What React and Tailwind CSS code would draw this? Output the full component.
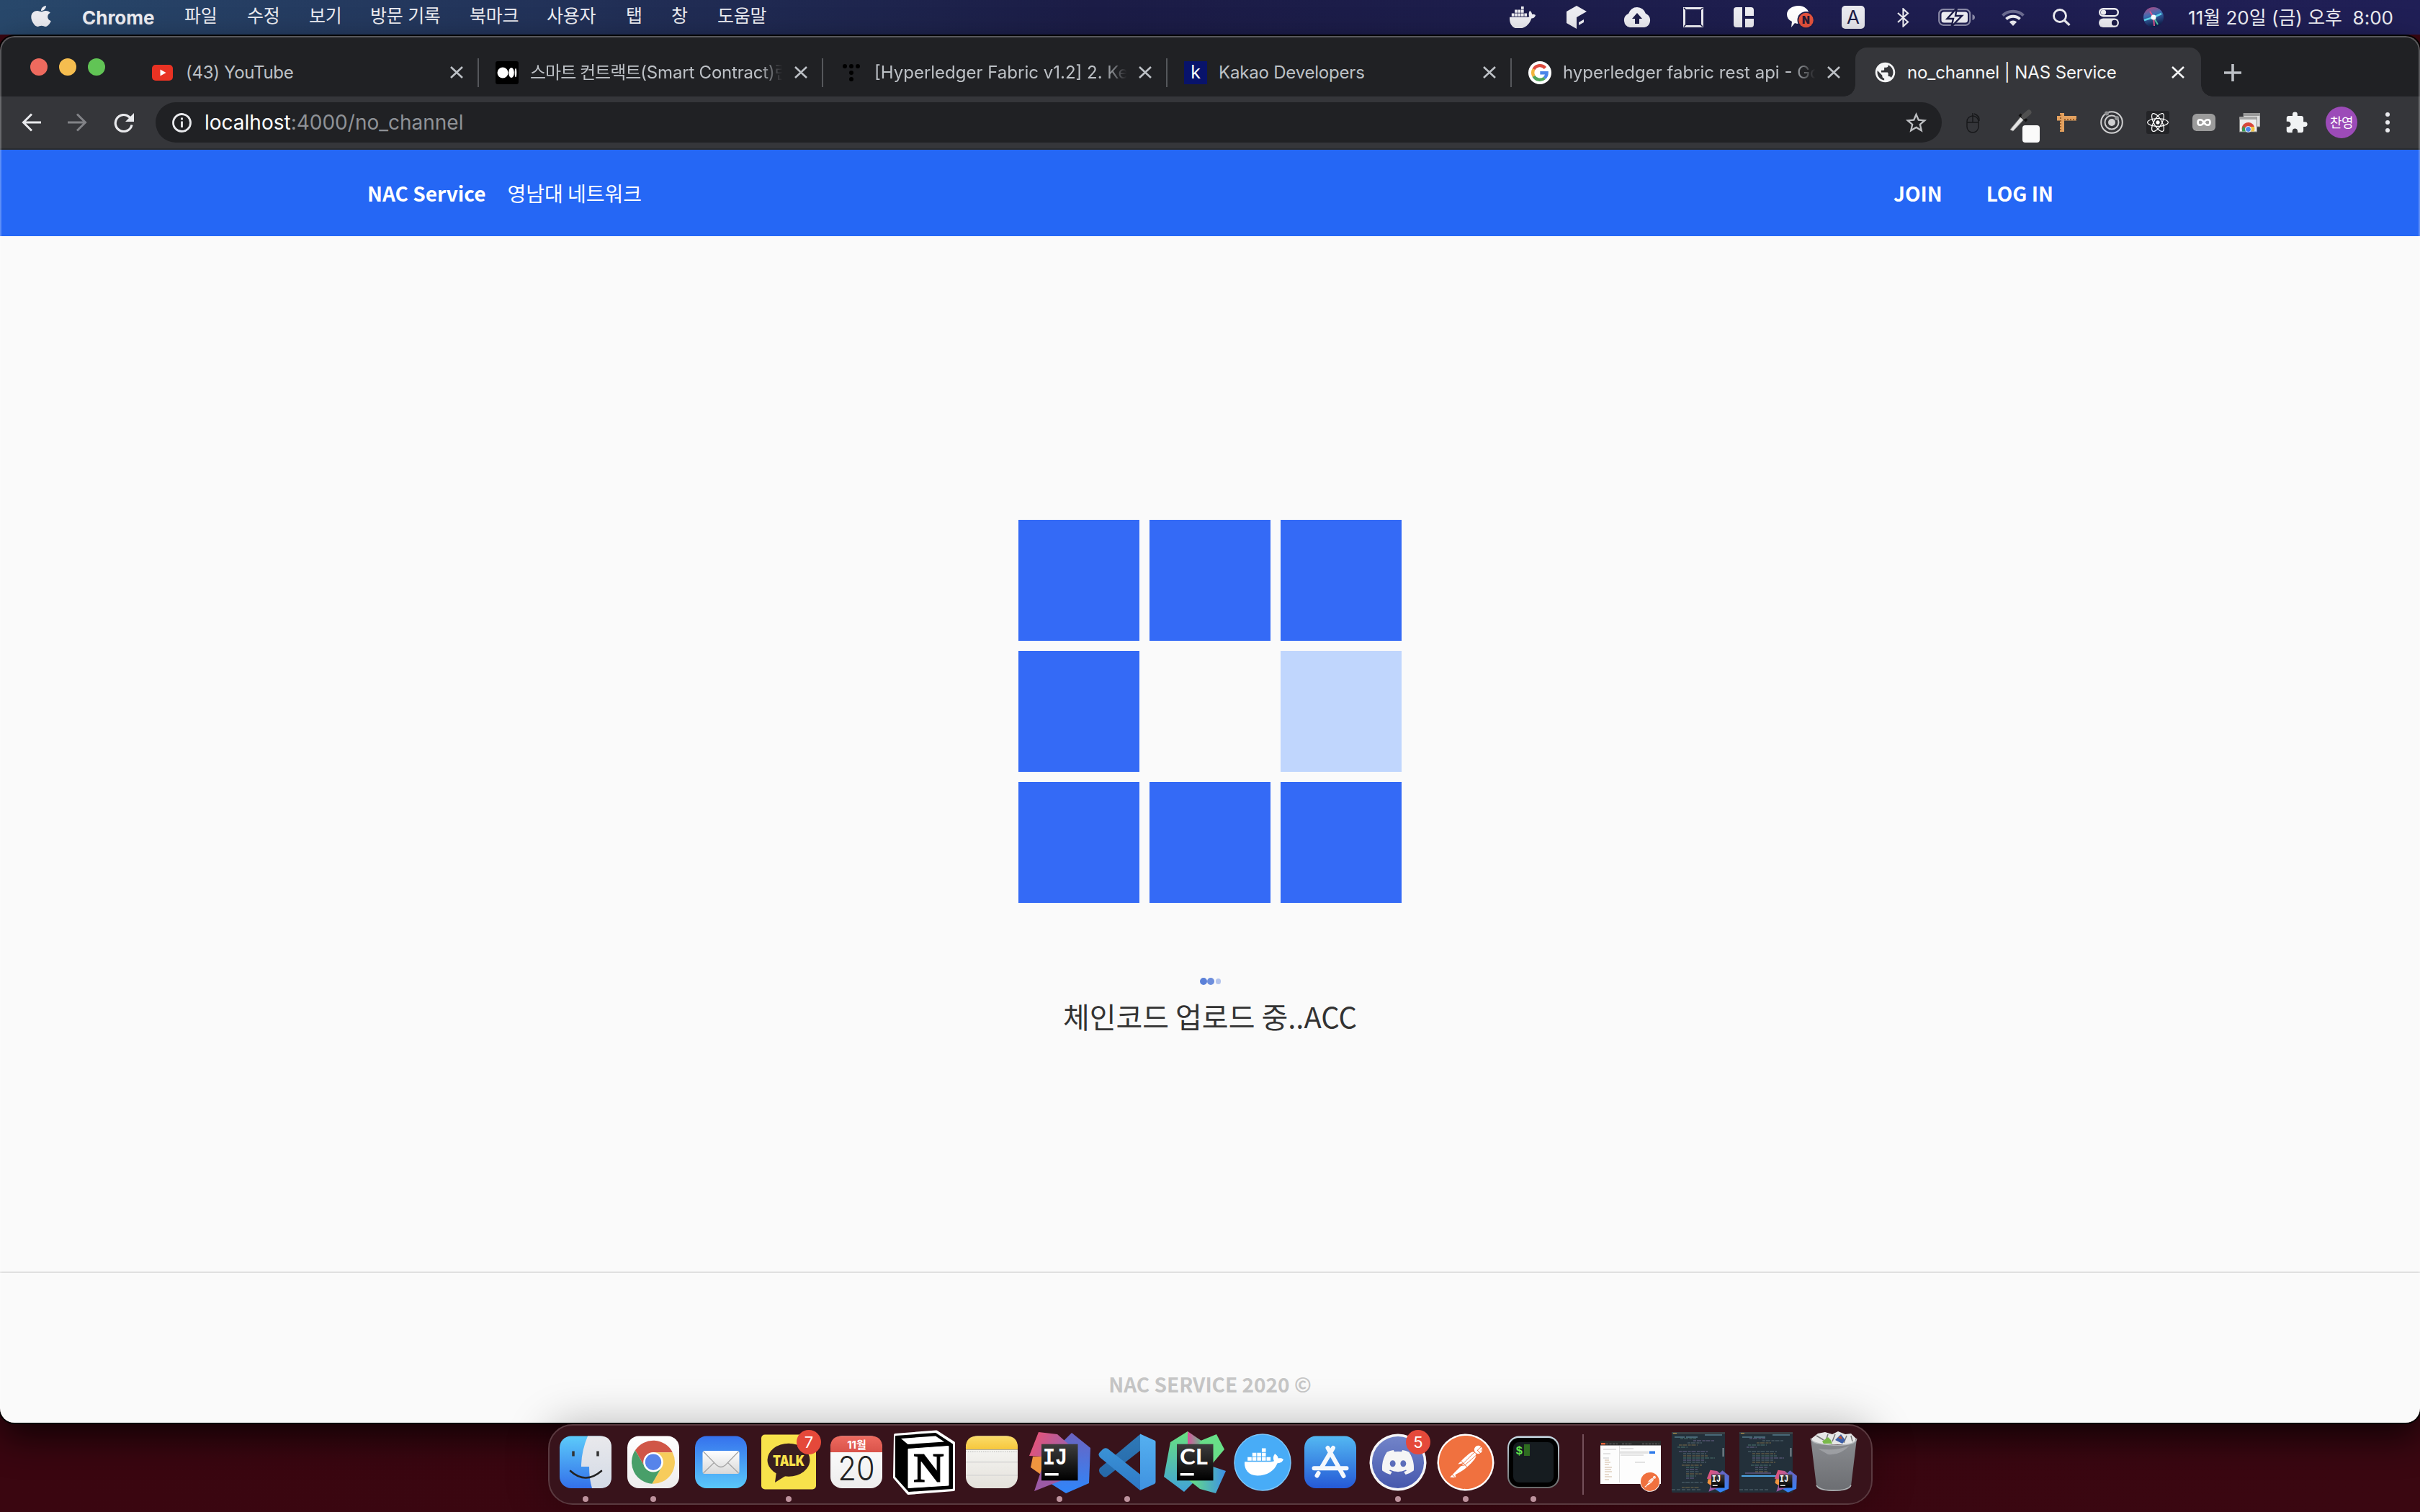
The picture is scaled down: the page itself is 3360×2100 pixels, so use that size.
import React from "react";
import { FaApple, FaDocker, FaDiscord, FaReact } from "react-icons/fa";
import { SiPostman } from "react-icons/si";
import { MdStarBorder, MdPublic, MdExtension } from "react-icons/md";

const UI = "font-['Inter','Noto_Sans_CJK_KR',sans-serif]";
const KR = "font-['Noto_Sans_CJK_KR',sans-serif]";

/* ---------- menu bar ---------- */

const MENUS = [
  ["파일", "w-[87px]"],
  ["수정", "w-[86px]"],
  ["보기", "w-[85px]"],
  ["방문 기록", "w-[138px]"],
  ["북마크", "w-[107px]"],
  ["사용자", "w-[110px]"],
  ["탭", "w-[63px]"],
  ["창", "w-[64px]"],
  ["도움말", "w-[90px]"],
];

function MenuBar() {
  return (
    <header className={`flex h-[48px] items-center whitespace-nowrap bg-linear-to-r from-[#28486b] via-[#1b1c46] via-45% to-[#201f56] text-[#ededf2] ${UI}`}>
      <FaApple className="ml-[43px] -mt-[3px] h-[33px] w-[28px]" preserveAspectRatio="none" />
      <span className="ml-[43px] w-[142px] text-[26px] font-bold">Chrome</span>
      {MENUS.map(([t, w]) => (
        <span key={t} className={`-mt-[3px] text-[25px] tracking-[-0.3px] ${w}`}>{t}</span>
      ))}
      <div className="ml-auto flex h-full items-center pr-[37px]">
        <FaDocker className="h-[30px] w-[36px]" preserveAspectRatio="none" viewBox="0 40 640 430" />
        <svg className="ml-[43px] h-[32px] w-[28px]" viewBox="0 0 28 32" fill="currentColor">
          <path d="M14 0L28 8L14 16V32L0 24V8Z" />
          <path d="M17 23L24 19V23L17 27Z" />
        </svg>
        <svg className="ml-[50px] h-[28px] w-[40px]" viewBox="0 0 40 28">
          <path d="M10 28A10 10 0 0 1 8 9A12.500 12.500 0 0 1 32 9A10 10 0 0 1 30 28Z" fill="currentColor" />
          <path d="M20 8L27 16H23V23H17V16H13Z" fill="#1c1c48" />
        </svg>
        <svg className="ml-[44px] h-[28px] w-[28px]" viewBox="0 0 28 28" fill="none" stroke="currentColor" strokeWidth="3">
          <rect x="1.500" y="1.500" width="25" height="25" />
          <path d="M1 1L4 4M27 1L24 4M1 27L4 24M27 27L24 24" stroke="#1c1c48" strokeWidth="1.500" />
        </svg>
        <svg className="ml-[42px] h-[28px] w-[28px]" viewBox="0 0 28 28" fill="currentColor">
          <path d="M4 0H12V28H4A4 4 0 0 1 0 24V4A4 4 0 0 1 4 0ZM16 0H24A4 4 0 0 1 28 4V12H16ZM16 16H28V24A4 4 0 0 1 24 28H16Z" />
        </svg>
        <svg className="ml-[46px] h-[32px] w-[37px]" viewBox="0 0 37 32">
          <path d="M16 0C25 0 31 6 31 13S25 25 16 25Q13 25 11 24L6 30L7 22Q0 19 0 12C0 5 7 0 16 0Z" fill="#fff" />
          <circle cx="26.500" cy="20" r="12" fill="#1c1c48" />
          <circle cx="26.500" cy="20" r="10.300" fill="#e5533d" />
          <text x="26.500" y="25" textAnchor="middle" fontSize="14" fontWeight="900" fill="#241a35">N</text>
        </svg>
        <span className="ml-[39px] flex h-[32px] w-[32px] items-center justify-center rounded-[5px] bg-[#e9e9ef] text-[26px] leading-none text-[#1c1c48]">A</span>
        <svg className="ml-[45px] h-[27px] w-[17px]" viewBox="0 0 17 27" fill="none" stroke="currentColor" strokeWidth="2.200">
          <path d="M1 7L15 19.500L8.500 25.500V1.500L15 7.500L1 20" />
        </svg>
        <svg className="ml-[40px] h-[24px] w-[51px]" viewBox="0 0 51 24">
          <rect x="1.200" y="1.200" width="43" height="21.600" rx="6" fill="none" stroke="#8b8ba8" strokeWidth="2.200" />
          <path d="M47.500 8V16Q51 15 51 12Q51 9 47.500 8Z" fill="#8b8ba8" />
          <rect x="4.500" y="4.500" width="36.500" height="15" rx="3.500" fill="currentColor" />
          <path d="M26 -1L12.500 14H21L18.500 25L33 10H24Z" fill="currentColor" stroke="#1c1c48" strokeWidth="2.400" />
        </svg>
        <svg className="ml-[37px] h-[24px] w-[32px]" viewBox="0 0 32 24" fill="none" strokeWidth="4">
          <path d="M1.500 9.500A21 21 0 0 1 30.500 9.500" stroke="#6b6b90" />
          <path d="M6.500 14.500A14 14 0 0 1 25.500 14.500" stroke="currentColor" />
          <path d="M16 24L10.800 18.500A7.500 7.500 0 0 1 21.200 18.500Z" fill="currentColor" />
        </svg>
        <svg className="ml-[39px] h-[24px] w-[25px]" viewBox="0 0 25 24" fill="none" stroke="currentColor" strokeWidth="2.800">
          <circle cx="10" cy="10" r="8.500" />
          <path d="M16 16L23.500 23" strokeWidth="3.200" />
        </svg>
        <svg className="ml-[39px] h-[27px] w-[28px]" viewBox="0 0 28 27">
          <rect x="1.200" y="1.200" width="25.600" height="10" rx="5" fill="none" stroke="currentColor" strokeWidth="2.400" />
          <circle cx="6.500" cy="6.200" r="3.600" fill="currentColor" />
          <rect y="14.500" width="28" height="12.500" rx="6.200" fill="currentColor" />
          <circle cx="21.800" cy="20.700" r="3.900" fill="#1c1c48" />
        </svg>
        <svg className="ml-[34px] h-[28px] w-[28px]" viewBox="0 0 28 28">
          <defs>
            <linearGradient id="siri" x1="0" y1="0" x2="0.300" y2="1">
              <stop offset="0" stopColor="#c2447c" /><stop offset="0.450" stopColor="#3e6fb5" /><stop offset="1" stopColor="#10204f" />
            </linearGradient>
          </defs>
          <circle cx="14" cy="14" r="14" fill="url(#siri)" />
          <path d="M14 14L1 18M14 14L25 9" stroke="#5bd2ea" strokeWidth="2.500" />
          <path d="M14 14L20 24" stroke="#54c9a5" strokeWidth="2" />
          <path d="M14 14L15 26M14 14L9 6" stroke="#e0568f" strokeWidth="2" />
          <circle cx="14" cy="14" r="3.500" fill="#fff" />
        </svg>
        <span className="ml-[34px] whitespace-pre text-[26px]">11월 20일 (금) 오후  8:00</span>
      </div>
    </header>
  );
}

/* ---------- browser ---------- */

function Cross({ className }) {
  return (
    <svg className={`h-[17px] w-[18px] shrink-0 ${className}`} viewBox="0 0 18 17" stroke="currentColor" strokeWidth="2.600">
      <path d="M1 1L17 16M17 1L1 16" />
    </svg>
  );
}

function GoogleG() {
  return (
    <svg className="h-[32px] w-[32px] shrink-0" viewBox="0 0 32 32">
      <circle cx="16" cy="16" r="16" fill="#fff" />
      <g fill="none" strokeWidth="4.400">
        <path d="M23.500 9.500A9.800 9.800 0 0 0 7.500 11.200" stroke="#dd4b3e" />
        <path d="M7.500 11.200A9.800 9.800 0 0 0 7.500 20.800" stroke="#f2b63c" />
        <path d="M7.500 20.800A9.800 9.800 0 0 0 22.500 23.300" stroke="#51a45a" />
        <path d="M22.500 23.300A9.800 9.800 0 0 0 25.600 16.200H16.300" stroke="#4b85ea" />
      </g>
    </svg>
  );
}

const TABS = [
  {
    title: <span className="tracking-[-0.3px]">(43) YouTube</span>,
    icon: (
      <svg className="h-[32px] w-[32px] shrink-0" viewBox="0 0 32 32">
        <rect x="1" y="5" width="29" height="22" rx="5" fill="#e93223" />
        <path d="M12.500 11.500L20.500 16L12.500 20.500Z" fill="#fff" />
      </svg>
    ),
  },
  {
    title: <><span className="tracking-[-1px]">스마트 컨트랙트</span><span className="tracking-[-0.2px]">(Smart Contract)</span><span className="tracking-[-4px]">란</span></>,
    fade: true,
    icon: (
      <svg className="h-[32px] w-[32px] shrink-0" viewBox="0 0 32 32">
        <rect width="32" height="32" rx="3" fill="#000" />
        <circle cx="10" cy="16" r="7.500" fill="#fff" />
        <ellipse cx="22" cy="16" rx="3.800" ry="7" fill="#fff" />
        <ellipse cx="28" cy="16" rx="1.300" ry="6.300" fill="#fff" />
      </svg>
    ),
  },
  {
    title: "[Hyperledger Fabric v1.2] 2. Ke",
    fade: true,
    icon: (
      <svg className="h-[32px] w-[32px] shrink-0" viewBox="0 0 32 32" fill="#000">
        <circle cx="7" cy="7" r="3" /><circle cx="16" cy="7" r="3" /><circle cx="25" cy="7" r="3" />
        <circle cx="16" cy="16" r="3" /><circle cx="16" cy="25" r="3" />
      </svg>
    ),
  },
  {
    title: <span className="tracking-[-0.2px]">Kakao Developers</span>,
    icon: <span className="flex h-[32px] w-[32px] shrink-0 items-center justify-center bg-[#08136b] text-[25px] leading-none text-white">k</span>,
  },
  { title: "hyperledger fabric rest api - Go", fade: true, icon: <GoogleG /> },
];

function TabStrip() {
  return (
    <div className="flex h-[84px] items-end bg-[#202124] pt-[14px] text-[24px] text-[#bdc1c6]">
      <div className="flex h-full w-[187px] gap-[16px] pl-[42px] pt-[17px]">
        <span className="h-[24px] w-[24px] rounded-full bg-[#ee6a5e]" />
        <span className="h-[24px] w-[24px] rounded-full bg-[#f5bd4f]" />
        <span className="h-[24px] w-[24px] rounded-full bg-[#61c455]" />
      </div>
      {TABS.map((t, i) => (
        <div key={i} className="flex h-[70px] w-[478px] items-center pt-[3px]">
          <div className="flex w-[476px] items-center pl-[23px]">
            {t.icon}
            <div className={`ml-[16px] w-[354px] whitespace-nowrap ${t.fade ? "mask-r-from-90% mask-r-to-99%" : ""}`}>{t.title}</div>
            <Cross className="ml-[13px]" />
          </div>
          {i < 4 && <span className="h-[40px] w-[2px] bg-[#55575b]" />}
        </div>
      ))}
      <div className="-ml-[17px] flex h-[70px] items-end">
        <span className="h-[16px] w-[16px] bg-[radial-gradient(circle_at_0_0,#202124_15.5px,#35363a_16px)]" />
        <div className="flex h-[68px] w-[480px] items-center rounded-t-[16px] bg-[#35363a] pl-[25px] pt-[1px] text-[#f4f5f6]">
          <MdPublic className="h-[33px] w-[33px]" />
          <span className="ml-[14px] w-[360px] whitespace-nowrap tracking-[-0.1px]">no_channel | NAS Service</span>
          <Cross className="ml-[7px]" />
        </div>
        <span className="h-[16px] w-[16px] bg-[radial-gradient(circle_at_100%_0,#202124_15.5px,#35363a_16px)]" />
      </div>
      <svg className="mb-[21px] ml-[16px] h-[24px] w-[24px]" viewBox="0 0 24 24" stroke="currentColor" strokeWidth="3.600">
        <path d="M12 0V24M0 12H24" />
      </svg>
    </div>
  );
}

function Toolbar() {
  return (
    <div className="flex h-[74px] items-center border-b-2 border-[#292b2e] bg-[#35363a] text-[#e9eaed]">
      <svg className="ml-[30px] h-[26px] w-[27px]" viewBox="0 0 27 26" fill="none" stroke="currentColor" strokeWidth="3"><path d="M27 13H3M14 1.500L2.500 13L14 24.500" /></svg>
      <svg className="ml-[37px] h-[26px] w-[27px] text-[#828387]" viewBox="0 0 27 26" fill="none" stroke="currentColor" strokeWidth="3"><path d="M0 13H24M13 1.500L24.500 13L13 24.500" /></svg>
      <svg className="ml-[37px] h-[27px] w-[28px]" viewBox="0 0 28 27" fill="none" stroke="currentColor" strokeWidth="3.200">
        <path d="M25 16.500A11.500 11.500 0 1 1 21.500 5.500L24 8" />
        <path d="M28 0V12H16Z" fill="currentColor" stroke="none" />
      </svg>
      <div className="ml-[30px] flex h-[56px] w-[2480px] items-center rounded-full bg-[#202124] pl-[23px] pr-[18px]">
        <svg className="h-[27px] w-[27px]" viewBox="0 0 27 27" fill="none" stroke="currentColor" strokeWidth="2.800"><circle cx="13.500" cy="13.500" r="12" /><path d="M13.500 11.500V20M13.500 6.500V9.500" /></svg>
        <span className="ml-[18px] text-[28px] text-[#8f9297]"><span className="text-white">localhost</span>:4000/no_channel</span>
        <MdStarBorder className="ml-auto h-[35px] w-[35px] text-[#bdbfc2]" />
      </div>
      <div className="flex h-full flex-1 items-center">
        <svg className="ml-[34px] h-[29px] w-[20px]" viewBox="0 0 20 29" fill="none" stroke="#17181a" strokeWidth="1.400">
          <rect x="1" y="5" width="16" height="23" rx="8" /><path d="M1 14H17M9 14V1M11 2Q19 5 18 12" />
        </svg>
        <svg className="ml-[39px] mt-[10px] h-[46px] w-[43px]" viewBox="0 0 43 46">
          <path d="M2 28L17 10L21 14L6 30Z" fill="#e4e4e4" stroke="#8b8b8b" />
          <path d="M15 7L25 16" stroke="#111" strokeWidth="4" /><path d="M21 10L28 4" stroke="#505050" strokeWidth="7" strokeLinecap="round" />
          <rect x="19" y="22" width="24" height="24" rx="4" fill="#fafafa" />
        </svg>
        <svg className="ml-[24px] h-[27px] w-[27px]" viewBox="0 0 27 27">
          <rect x="0" y="4" width="27" height="6.500" fill="#e3a15f" /><rect x="4" width="6" height="26" fill="#e3a15f" />
          <path d="M5 2V26M10 9H27" stroke="#9a5f2b" strokeDasharray="2 2" strokeWidth="2" />
        </svg>
        <svg className="ml-[33px] h-[32px] w-[32px]" viewBox="0 0 32 32" fill="none" stroke="#cfcfd0" strokeWidth="2">
          <circle cx="16" cy="16" r="14.800" /><circle cx="16" cy="16" r="9.500" /><circle cx="16" cy="16" r="5" fill="#cfcfd0" stroke="none" />
          <circle cx="9" cy="3.500" r="3" fill="#8f9092" stroke="none" /><circle cx="23" cy="10" r="3" fill="#8f9092" stroke="none" />
        </svg>
        <span className="ml-[32px] flex h-[32px] w-[32px] items-center justify-center rounded-[3px] bg-[#232427]"><FaReact className="h-[30px] w-[30px] text-white" /></span>
        <svg className="ml-[32px] h-[24px] w-[32px]" viewBox="0 0 32 24">
          <rect width="32" height="24" rx="6" fill="#9b9b9b" />
          <path d="M16 12C13 7 7.500 7 7.500 12S13 17 16 12S24.500 7 24.500 12S19 17 16 12Z" fill="none" stroke="#fff" strokeWidth="2.600" />
        </svg>
        <svg className="ml-[33px] h-[27px] w-[29px]" viewBox="0 0 29 27">
          <rect x="6" width="23" height="19" fill="#ddd" stroke="#888" /><rect x="6" width="23" height="4" fill="#999" />
          <rect x="0.500" y="6" width="24" height="20" fill="#eee" stroke="#888" /><rect x="0.500" y="5" width="24" height="4" fill="#a5a5a5" />
          <path d="M4 25A9 9 0 0 1 21 19L12 20Z" fill="#d8473b" /><path d="M4 25.500Q3.500 21 6 18L11 25.500Z" fill="#3b9b55" /><path d="M13 19H21Q22 22 21 25.500H13Z" fill="#f1c140" />
          <circle cx="12.500" cy="22.500" r="4" fill="#4a84ea" stroke="#fff" strokeWidth="1" />
        </svg>
        <MdExtension className="ml-[34px] h-[33px] w-[33px] text-[#f1f3f4]" />
        <span className="ml-[24px] flex h-[44px] w-[44px] items-center justify-center rounded-full bg-[#9c4bb8] text-[18px] tracking-[-0.5px] text-white">찬영</span>
        <svg className="ml-[39px] h-[28px] w-[6px]" viewBox="0 0 6 28" fill="currentColor"><circle cx="3" cy="3" r="3" /><circle cx="3" cy="14" r="3" /><circle cx="3" cy="25" r="3" /></svg>
      </div>
    </div>
  );
}

function Page() {
  const cell = "h-[168px] w-[168px] bg-[#346af6]";
  return (
    <div className={`flex flex-1 flex-col bg-[#fafafa] ${KR}`}>
      <nav className="flex h-[120px] items-center bg-[#2567f5] pl-[510px] pr-[509px] text-[28px] font-bold text-white">
        <span>NAC Service</span>
        <span className="ml-[30px] font-normal">영남대 네트워크</span>
        <span className="ml-auto">JOIN</span>
        <span className="ml-[61px]">LOG IN</span>
      </nav>
      <main className="flex h-[1438px] flex-col items-center pt-[394px]">
        <div className="grid grid-cols-3 gap-[14px]">
          <div className={cell} /><div className={cell} /><div className={cell} />
          <div className={cell} /><div /><div className="h-[168px] w-[168px] bg-[#c0d6fd]" />
          <div className={cell} /><div className={cell} /><div className={cell} />
        </div>
        <div className="mt-[104px] flex h-[10px] w-[30px] items-center pl-[1px]">
          <span className="h-[10px] w-[10px] rounded-full bg-[#5b80d8]" />
          <span className="h-[10px] w-[10px] rounded-full bg-[#6d8edc]" />
          <span className="ml-[2px] h-[8px] w-[7px] rounded-full bg-[#b4c4ec]" />
        </div>
        <p className="mt-[13px] text-[40px] leading-[60px] text-[#333]">체인코드 업로드 중..ACC</p>
      </main>
      <footer className="flex flex-1 items-end justify-center border-t-2 border-[#e0e0e0] pb-[33px] text-[28px] font-bold leading-[42px] text-[#c6c6c6]">
        NAC SERVICE 2020 ©
      </footer>
    </div>
  );
}

/* ---------- dock ---------- */

const Slot = ({ children, dot }) => (
  <div className="flex w-[94px] flex-col items-center">
    <svg className="h-[94px] w-[94px] overflow-visible" viewBox="0 0 94 94">{children}</svg>
    {dot && <span className="h-[8px] w-[8px] rounded-full bg-[#bd929d]" />}
  </div>
);

const Tile = ({ fill }) => <rect x="11" y="10.500" width="72" height="72.500" rx="16" fill={fill} />;

const Badge = ({ n }) => (
  <g>
    <circle cx="75" cy="19" r="17" fill="#e5493a" />
    <text x="75" y="27" textAnchor="middle" fontSize="22" fill="#fff">{n}</text>
  </g>
);

const IJ = () => (
  <g>
    <path d="M64 6L90 27L88 76L56 90L34 76L50 20Z" fill="url(#ijb)" />
    <path d="M18 5L44 8L62 24L60 40L22 39L5 38Z" fill="url(#ijp)" />
    <path d="M10 39L24 39L24 66L7 54Z" fill="#f0953f" />
    <path d="M22 57L12 87L50 72Z" fill="#9c5aa5" />
    <rect x="22" y="21.700" width="50.500" height="50.600" fill="url(#blk)" />
    <text x="24" y="50" fontSize="34" fontWeight="700" fontFamily="Liberation Mono, monospace" textLength="34" lengthAdjust="spacingAndGlyphs" fill="#fff">IJ</text>
    <rect x="26.700" y="62" width="19" height="3.500" fill="#fff" />
  </g>
);

const Post = () => (
  <g>
    <circle cx="47" cy="47" r="39.500" fill="#fff" />
    <g transform="translate(10 10)"><SiPostman size={74} className="h-[74px] w-[74px] text-[#f0713f]" /></g>
  </g>
);

function Defs() {
  const g = (id, a, b, o = {}) => (
    <linearGradient id={id} x1={o.x1 || 0} y1={o.y1 || 0} x2={o.x2 || 0} y2={o.y2 ?? 1}>
      <stop offset="0" stopColor={a} /><stop offset="1" stopColor={b} />
    </linearGradient>
  );
  return (
    <svg className="absolute h-0 w-0">
      <defs>
        {g("fblue", "#5ccbfa", "#3370ea")}{g("fgrey", "#e9e9ec", "#d3dae6")}{g("white", "#ffffff", "#ededed")}
        {g("mail", "#3571ed", "#5ac8fa")}{g("env", "#ffffff", "#d8d8d8")}{g("cal", "#ee6a5f", "#d9534a")}
        {g("paper", "#fafaf8", "#e4e1db")}{g("yel", "#fbdc6a", "#f6c73c")}{g("blk", "#3d3d3d", "#000000")}
        {g("ijb", "#6b63c0", "#2f86fb")}{g("ijp", "#f0506f", "#a560a8", { x2: 1, y2: 0.3 })}
        {g("cl1", "#68e07f", "#41a3d8")}{g("cl2", "#68e07f", "#3c8fe8", { x2: 1, y2: 0 })}{g("clp", "#d9509b", "#68c08f", { x2: 1, y2: 0 })}
        {g("vs1", "#2f7ab8", "#2668a8")}{g("vs2", "#3a93d6", "#2e77c6")}{g("vs3", "#55b0f0", "#3f92e0")}
        {g("store", "#53b8f2", "#2559d6")}{g("disc", "#7284c9", "#4658ad")}
        {g("term", "#c9dbe5", "#6a6a6a")}{g("bin", "#8f9397", "#6e7276")}
      </defs>
    </svg>
  );
}

const CODE = [
  [8, 12, 22], [11, 30, 30], [14, 22, 20], [17, 10, 26], [20, 8, 14], [26, 10, 40], [29, 16, 32], [32, 16, 34], [35, 16, 44], [38, 16, 30],
  [41, 16, 32], [45, 14, 28], [48, 20, 18], [51, 20, 16], [54, 20, 18], [57, 20, 22], [60, 20, 14], [63, 20, 12], [69, 14, 30], [76, 14, 24],
];
const HUE = ["#4d746f", "#6d648c", "#566b75", "#7d6c4b"];

function CodeThumb({ variant }) {
  return (
    <svg className="h-[84px] w-[74px] overflow-visible" viewBox="0 0 74 84">
      <rect width="74" height="84" rx="1.500" fill="#23303a" />
      <rect width="74" height="3" fill="#3a3f44" />
      <path d="M2 1.500H7" stroke="#c9a14a" /><path d="M4 7H18M20 7H36M46 4H70" stroke="#55798a" strokeWidth="1.500" />
      {CODE.map(([y, x, w], i) => (variant && y > 56 ? null : (
        <path key={y} d={`M${variant ? x + 2 : x} ${y + 1}h${w}`} stroke={HUE[(i + (variant ? 1 : 0)) % 4]} strokeDasharray="4 1 6 1.500" strokeWidth="1" />
      )))}
      {variant && <path d="M3 61H60" stroke="#4fa8e8" strokeWidth="2" />}
      {variant && <path d="M8 57H44" stroke="#7c6aa5" />}
      <path d="M71.500 22V34" stroke="#7c8890" strokeWidth="2" />
      <path d="M0 80H40" stroke="#596a74" strokeDasharray="5 2" />
      <g transform="translate(47 51) scale(0.365)"><IJ /></g>
    </svg>
  );
}

function Dock() {
  const chromeArc = "M-25.100 -16.400A30 30 0 0 1 26.800 -13.500L0 -13.500L-11.700 6.750Z";
  return (
    <div className={`relative mt-[2px] flex h-[112px] w-[1839px] items-start self-center rounded-[34px] border-2 border-[#5a3a40] bg-[#38131b] pl-[3px] pt-[4px] shadow-[0_0_60px_rgba(0,0,0,0.28)] ${UI}`}>
      <Defs />
      <Slot dot>
        <Tile fill="url(#fblue)" />
        <path d="M50 10.500Q41 32 41 53H52Q52 70 56 83H67Q83 83 83 67V26.500Q83 10.500 67 10.500Z" fill="url(#fgrey)" />
        <path d="M30 31.500V38.500M64 31.500V38.500" stroke="#333" strokeWidth="3.500" />
        <path d="M26 59Q47 78 69 59" fill="none" stroke="#222" strokeWidth="2.600" strokeLinecap="round" />
      </Slot>
      <Slot dot>
        <Tile fill="url(#white)" />
        <g transform="translate(47 46.700)">
          <path d={chromeArc} fill="#d05647" />
          <path d={chromeArc} transform="rotate(120)" fill="#f7cc5c" />
          <path d={chromeArc} transform="rotate(240)" fill="#489f69" />
          <circle r="13.800" fill="#fff" /><circle r="11.200" fill="#5784ea" />
        </g>
      </Slot>
      <Slot>
        <Tile fill="url(#mail)" />
        <rect x="21.500" y="31" width="51" height="32" rx="3" fill="url(#env)" />
        <path d="M22.500 62L38 47M71.500 62L56 47M22.500 32L41 51Q47 56 53 51L71.500 32" fill="none" stroke="#a5a5a5" strokeWidth="1.300" />
      </Slot>
      <Slot dot>
        <rect x="9" y="8.500" width="76" height="76" rx="5" fill="#f8e24b" />
        <ellipse cx="47" cy="43.700" rx="29.500" ry="23" fill="#381e20" />
        <path d="M30 60L28 75L44 65Z" fill="#381e20" />
        <text x="25" y="51.500" fontSize="20" fontWeight="900" textLength="44" lengthAdjust="spacingAndGlyphs" fill="#f8e24b">TALK</text>
        <Badge n="7" />
      </Slot>
      <Slot>
        <Tile fill="url(#white)" />
        <path d="M11 33V26.500Q11 10.500 27 10.500H67Q83 10.500 83 26.500V33Z" fill="url(#cal)" />
        <text x="47.500" y="28" textAnchor="middle" fontSize="15" fontWeight="700" fill="#fff">11월</text>
        <text x="47" y="72" textAnchor="middle" fontSize="46" fontWeight="300" textLength="51" lengthAdjust="spacingAndGlyphs" fill="#222">20</text>
      </Slot>
      <Slot>
        <path d="M7 9L64 4.500L88 20V85L25 90L6 68Z" fill="#fff" stroke="#fff" strokeWidth="4" strokeLinejoin="round" />
        <path d="M8 11L63 7L86 22V83L26 87L8 67Z" fill="#000" stroke="#000" strokeWidth="2" strokeLinejoin="round" />
        <path d="M15 14L63 10.500L75 18.500L24.500 22Z" fill="#fff" />
        <path d="M25 28.500L81 24.500V79L25 82.500Z" fill="#fff" stroke="#fff" strokeLinejoin="round" />
        <text x="53.500" y="73.500" textAnchor="middle" fontSize="58" fontWeight="700" fontFamily="Liberation Serif, serif" fill="#000" stroke="#000" strokeWidth="1.200">N</text>
      </Slot>
      <Slot>
        <Tile fill="url(#paper)" />
        <path d="M11 29V26.500Q11 10.500 27 10.500H67Q83 10.500 83 26.500V29Z" fill="url(#yel)" />
        <path d="M11 29.500H83" stroke="#a9a9a9" /><path d="M11 32.500H83" stroke="#b5b5b5" strokeDasharray="1.500 1.500" />
        <path d="M11 46.700H83M11 65H83" stroke="#cfcfcf" strokeWidth="1.200" />
      </Slot>
      <Slot dot><IJ /></Slot>
      <Slot dot>
        <path d="M65 8L66 30L20 66Q16 69 13 66L9 62Q7 58 9 55Z" fill="url(#vs1)" />
        <path d="M20 28L66 64.500L65 86L9 40Q6 36 9 33L13 29Q16 26 20 28Z" fill="url(#vs2)" />
        <path d="M65 7.500L86 17Q86.500 18 86.500 19V74Q86.500 76 85 77L65 86Z" fill="url(#vs3)" />
      </Slot>
      <Slot>
        <path d="M37 4L13 19L4 67L32 88L50 70V20Z" fill="url(#cl1)" />
        <path d="M37 4L56 17V24H37Z" fill="url(#clp)" />
        <path d="M55 17L77 8L88 29L72 48L50 30Z" fill="#68df88" />
        <path d="M72 53L90 59L76 90L54 84L39 72Z" fill="url(#cl2)" />
        <rect x="22" y="21.700" width="50.500" height="50.600" fill="url(#blk)" />
        <text x="26" y="50" fontSize="30" fontWeight="700" textLength="39" lengthAdjust="spacingAndGlyphs" fontFamily="Lato, sans-serif" fill="#fff">CL</text>
        <rect x="26.700" y="62" width="19" height="3.500" fill="#fff" />
      </Slot>
      <Slot>
        <circle cx="47" cy="47" r="39" fill="#48acf7" stroke="#7cc6fa" strokeWidth="1.500" />
        <g transform="translate(22 24.500)"><FaDocker className="h-[44px] w-[54px] text-white" /></g>
      </Slot>
      <Slot>
        <Tile fill="url(#store)" />
        <g stroke="#f4f8fd" strokeWidth="6" strokeLinecap="round">
          <path d="M51 27L35 54M30.500 62L28.500 65.500M43.500 27L65.500 66M24.500 55.300H69.500" />
        </g>
      </Slot>
      <Slot dot>
        <circle cx="47" cy="47" r="39.500" fill="#f5f5f7" /><circle cx="47" cy="47" r="36" fill="url(#disc)" />
        <g transform="translate(23 27.500)"><FaDiscord className="h-[39px] w-[48px] text-[#f5f5f5]" preserveAspectRatio="none" /></g>
        <Badge n="5" />
      </Slot>
      <Slot dot><Post /></Slot>
      <Slot dot>
        <Tile fill="url(#term)" />
        <rect x="13" y="13" width="68" height="68" rx="14" fill="#000" />
        <rect x="19" y="19" width="56" height="56" rx="8" fill="#161c20" />
        <text x="22.500" y="36" fontSize="16" fontWeight="700" fontFamily="Liberation Mono, monospace" fill="#63e54d">$</text>
        <rect x="34" y="22" width="8" height="16" fill="#2e6b20" />
      </Slot>
      <span className="ml-[21px] mt-[8px] h-[84px] w-[2px] bg-[#74505a]" />
      <svg className="ml-[23px] mt-[17px] h-[60px] w-[84px] overflow-visible" viewBox="0 0 84 60">
        <rect width="84" height="60" fill="#fdfdfd" /><rect width="84" height="6.500" fill="#2b2b2b" />
        <rect x="1" y="3" width="6" height="2.500" fill="#e2643b" /><path d="M8 4.500H24M30 4.500H44M58 4.500H82" stroke="#777" strokeDasharray="3 1.500" />
        <path d="M26.500 7V58" stroke="#ddd" /><rect x="27" y="14.500" width="40" height="3.500" fill="#e3e3e3" /><rect x="68" y="14.500" width="8" height="3.500" fill="#2f7bea" />
        <path d="M4 12H22M4 18H14M4 24H12M28 20H60M28 11H46M48 30H62" stroke="#c8c8c8" />
        <path d="M6 27H12M6 30H14M6 33H12M6 37H16M6 40H15M6 43H16M6 47H12M6 50H16M6 54H12" stroke="#d0b9a0" />
        <g transform="translate(52.500 40.500) scale(0.350)"><Post /></g>
      </svg>
      <div className="ml-[15px] mt-[5px]"><CodeThumb /></div>
      <div className="ml-[20px] mt-[5px]"><CodeThumb variant /></div>
      <svg className="ml-[25px] mt-[4px] h-[83px] w-[64px] overflow-visible" viewBox="0 0 64 83">
        <path d="M1 10L10 3L20 1L30 4L38 0L48 4L56 3L63 10L60 18H4Z" fill="#e6e6e6" />
        <path d="M8 6L18 12M24 4L20 16M34 4L30 14M50 6L46 16M56 6L58 14" stroke="#777" strokeWidth="1.500" />
        <path d="M16 14L24 8L28 12L30 17H18Z" fill="#79b84a" /><path d="M34 12L42 4L48 12L44 17Z" fill="#3d5fa8" /><path d="M38 9L42 6L44 11Z" fill="#c7552d" />
        <path d="M0 10Q2 18 32 19T64 10L56 76Q54 83 32 83T8 76Z" fill="url(#bin)" opacity="0.950" />
        <path d="M10 24Q32 28 54 20Q40 34 24 32Z" fill="#b5b8bb" opacity="0.500" />
        <path d="M0 10Q2 18 32 19T64 10" fill="none" stroke="#b9bcbf" strokeWidth="1.300" />
        <path d="M8 75Q12 82 32 82T56 75" fill="none" stroke="#b5b8ba" strokeWidth="1.500" />
      </svg>
    </div>
  );
}

export default function App() {
  return (
    <div className="relative flex h-[2100px] w-[3360px] flex-col overflow-hidden bg-linear-to-r from-[#3a0610] to-[#3a0711]">
      <MenuBar />
      <div className="relative mt-[2px] flex h-[1926px] flex-col overflow-hidden rounded-[20px] shadow-[0_0_0_2px_#000,0_20px_50px_rgba(0,0,0,0.7)]">
        <div className={UI}>
          <TabStrip />
          <Toolbar />
        </div>
        <Page />
        <span className="pointer-events-none absolute inset-0 rounded-[20px] border-x-2 border-t-2 border-white/25" />
      </div>
      <Dock />
    </div>
  );
}
